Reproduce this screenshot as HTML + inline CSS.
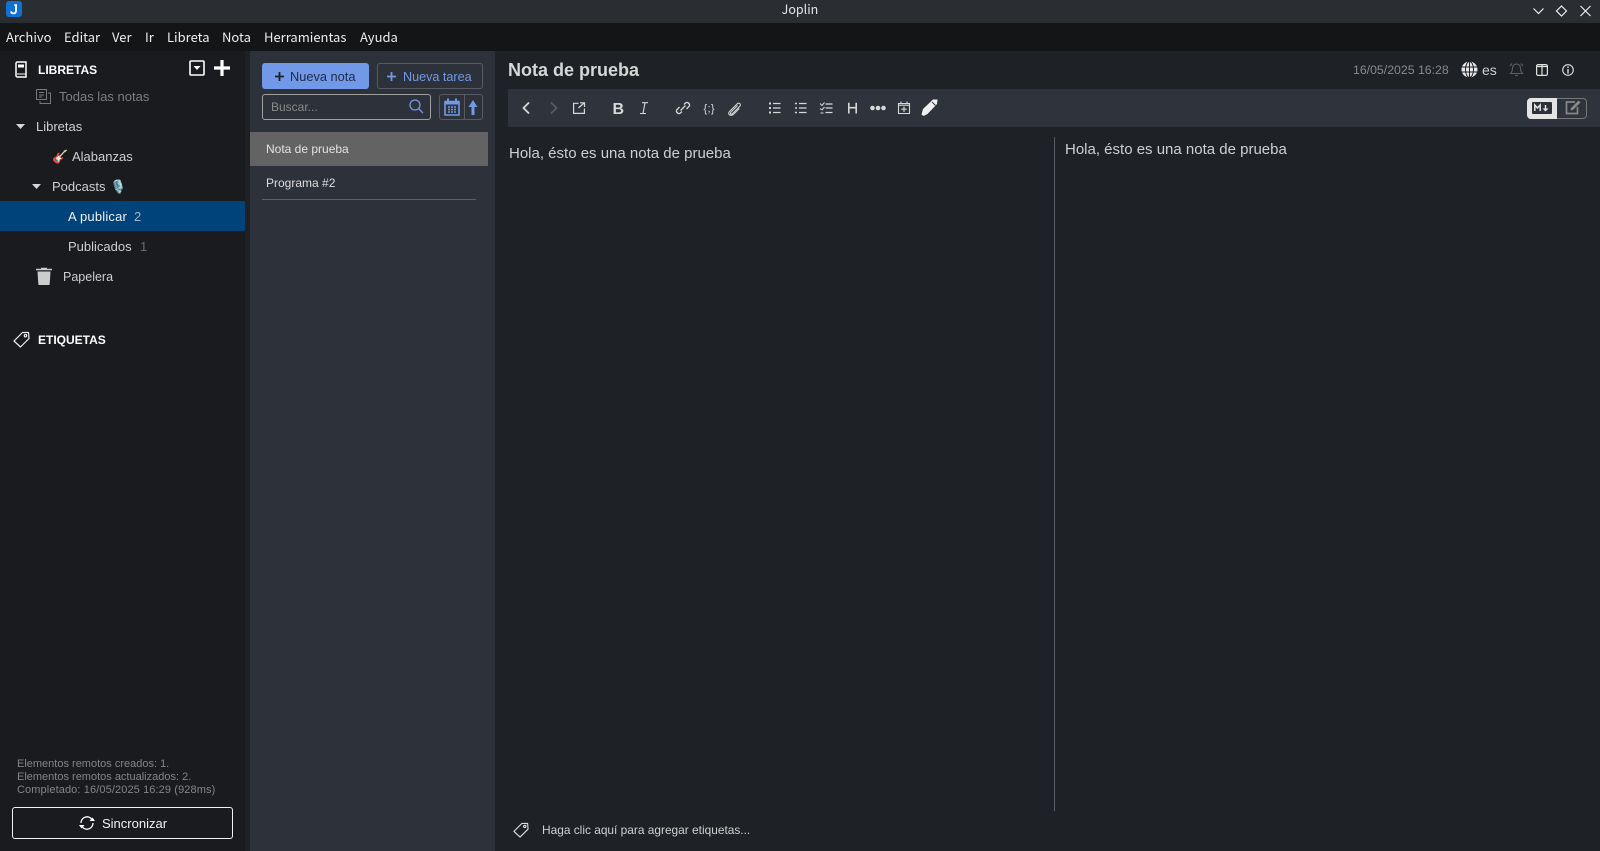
<!DOCTYPE html>
<html><head><meta charset="utf-8"><title>Joplin</title>
<style>
html,body{margin:0;padding:0;width:1600px;height:851px;overflow:hidden;background:#1e2126;font-family:"Liberation Sans",sans-serif}
.a{position:absolute;white-space:nowrap}
.t{position:absolute;white-space:nowrap;line-height:16px;font-size:13px;transform:translateY(-50%)}
.m{position:absolute;top:28px;line-height:18px;font-size:13px;color:#eee;font-family:"Noto Sans CJK JP","Liberation Sans",sans-serif;white-space:nowrap}
svg{position:absolute;overflow:visible;fill:none}
</style></head><body>
<!-- bars -->
<div class="a" style="left:0;top:0;width:1600px;height:23px;background:#2a2e33"></div>
<div class="a" style="left:0;top:23px;width:1600px;height:28px;background:#141517"></div>
<div class="a" style="left:0;top:51px;width:245px;height:800px;background:#1a1b1f"></div>
<div class="a" style="left:245px;top:51px;width:5px;height:800px;background:#1e2024"></div>
<div class="a" style="left:250px;top:51px;width:245px;height:800px;background:#2d3139"></div>
<div class="a" style="left:495px;top:51px;width:1105px;height:800px;background:#1e2126"></div>

<!-- logo -->
<div class="a" style="left:6px;top:1px;width:16px;height:16px;border-radius:3px;background:#1071d3"></div>
<svg style="left:6px;top:1px" width="16" height="16" viewBox="0 0 16 16"><path d="M10 3.200V10.200A2.600 2.600 0 0 1 4.900 10.400" stroke="#fff" stroke-width="1.800"/><path d="M8 4H11" stroke="#fff" stroke-width="1.200"/></svg>
<div class="t" style="left:0;width:1600px;text-align:center;top:9px;font-size:12.500px;color:#e4e4e4;font-family:'Noto Sans CJK JP','Liberation Sans',sans-serif">Joplin</div>
<svg style="left:1530px;top:3px" width="65" height="16" viewBox="0 0 65 16" stroke="#eee" stroke-width="1.200"><path d="M3.500 5.500L8.500 10.500L13.500 5.500"/><path d="M32 3.500L37 8.500L32 13.500L27 8.500Z" transform="translate(-.5 -.5)"/><path d="M51.500 3.500L61.500 13.500M61.500 3.500L51.500 13.500" transform="translate(-1 -.5)"/></svg>

<!-- menu -->
<div class="m" style="left:6px">Archivo</div><div class="m" style="left:64px">Editar</div><div class="m" style="left:112px">Ver</div><div class="m" style="left:145px">Ir</div><div class="m" style="left:167px">Libreta</div><div class="m" style="left:222px">Nota</div><div class="m" style="left:264px">Herramientas</div><div class="m" style="left:360px">Ayuda</div>

<!-- sidebar -->
<svg style="left:15px;top:61px" width="12" height="17" viewBox="0 0 12 17"><path d="M1 2.500A1.500 1.500 0 0 1 2.500 1H11V16H2.500A1.500 1.500 0 0 1 1 14.500Z" stroke="#fff" stroke-width="1.500"/><rect x="3" y="3.500" width="6" height="3" fill="#fff"/><path d="M2 13H11" stroke="#fff"/></svg>
<div class="t" style="left:38px;top:70px;font-size:12px;font-weight:bold;color:#fff">LIBRETAS</div>
<svg style="left:189px;top:60px" width="16" height="16" viewBox="0 0 16 16"><rect x="1" y="1" width="14" height="14" rx="1" stroke="#fff" stroke-width="1.600"/><path d="M4.500 6H11.500L8 10Z" fill="#fff"/></svg>
<svg style="left:214px;top:60px" width="16" height="16" viewBox="0 0 16 16"><path d="M8 0V16M0 8H16" stroke="#fff" stroke-width="3.200"/></svg>
<svg style="left:36px;top:89px" width="15" height="15" viewBox="0 0 15 15" stroke="#777" stroke-width="1"><path d="M.5.500H10.500V10.500H.5ZM3 3.500H8M3 6H8M3 8H6"/><path d="M12 4H14.500V14.500H4V12"/></svg>
<div class="t" style="left:59px;top:97px;color:#7d7d7d">Todas las notas</div>
<svg style="left:16px;top:124px" width="9" height="5"><path d="M0 0H9L4.500 5Z" fill="#d6d6d6"/></svg>
<div class="t" style="left:36px;top:127px;color:#cfcfcf">Libretas</div>
<div class="t" style="left:52px;top:157px;font-size:13px;color:#cfcfcf">🎸</div>
<div class="t" style="left:72px;top:157px;color:#cfcfcf">Alabanzas</div>
<svg style="left:32px;top:184px" width="9" height="5"><path d="M0 0H9L4.500 5Z" fill="#d6d6d6"/></svg>
<div class="t" style="left:52px;top:187px;color:#cfcfcf">Podcasts</div>
<div class="t" style="left:110px;top:187px;font-size:13px;color:#cfcfcf">🎙️</div>
<div class="a" style="left:0;top:201px;width:245px;height:30px;background:#00437a"></div>
<div class="t" style="left:68px;top:217px;letter-spacing:.2px;color:#f0f0f0">A publicar</div>
<div class="t" style="left:134px;top:217px;color:#9fb6cb">2</div>
<div class="t" style="left:68px;top:247px;color:#cfcfcf">Publicados</div>
<div class="t" style="left:140px;top:247px;color:#6c6c6c">1</div>
<svg style="left:36px;top:267px" width="16" height="18" viewBox="0 0 16 18"><path d="M0 2.500H16" stroke="#ccc" stroke-width="1.500"/><path d="M5 1.500H11" stroke="#ccc" stroke-width="1.500"/><path d="M1.500 4.500H14.500L13.700 17A1 1 0 0 1 12.700 18H3.300A1 1 0 0 1 2.300 17Z" fill="#ccc"/></svg>
<div class="t" style="left:63px;top:277px;font-size:12.500px;color:#cfcfcf">Papelera</div>
<svg style="left:13px;top:331px" width="17" height="17" viewBox="0 0 17 17" stroke="#eee" stroke-width="1.200"><path d="M1 10L9.500 1.500L15.500 1.500L16 7.500L7.500 16Z" stroke-linejoin="round"/><circle cx="12.500" cy="4.700" r="1.200"/></svg>
<div class="t" style="left:38px;top:340px;font-size:12px;font-weight:bold;color:#fff">ETIQUETAS</div>
<div class="a" style="left:17px;top:758px;font-size:11px;line-height:13px;color:#858585">Elementos remotos creados: 1.<br>Elementos remotos actualizados: 2.<br><span style="letter-spacing:.11px">Completado: 16/05/2025 16:29 (928ms)</span></div>
<div class="a" style="left:12px;top:807px;width:219px;height:30px;border:1px solid #f2f2f2;border-radius:3px"></div>
<svg style="left:78px;top:814px" width="18" height="18" viewBox="0 0 18 18" stroke="#fff" stroke-width="1.300"><path d="M3 9A6 6 0 0 1 14 5.500M15 9A6 6 0 0 1 4 12.500"/><path d="M11.500 7H17L14.500 3.500Z M6.500 11H1L3.500 14.500Z" fill="#fff" stroke="none"/></svg>
<div class="t" style="left:102px;top:824px;font-size:13px;color:#f2f2f2">Sincronizar</div>

<!-- note list -->
<div class="a" style="left:262px;top:63px;width:107px;height:26px;background:#7199e8;border-radius:3px"></div>
<svg style="left:275px;top:72px" width="9" height="9"><path d="M4.500 0V9M0 4.500H9" stroke="#1e2126" stroke-width="1.800"/></svg>
<div class="t" style="left:290px;top:76.500px;font-size:12.800px;color:#1e2a44">Nueva nota</div>
<div class="a" style="left:377px;top:63px;width:104px;height:24px;border:1px solid #575b63;border-radius:3px"></div>
<svg style="left:387px;top:72px" width="9" height="9"><path d="M4.500 0V9M0 4.500H9" stroke="#7199e8" stroke-width="1.800"/></svg>
<div class="t" style="left:403px;top:76.500px;font-size:12.600px;color:#7199e8">Nueva tarea</div>
<div class="a" style="left:262px;top:94px;width:167px;height:24px;border:1px solid #a0a0a0;border-radius:3px"></div>
<div class="t" style="left:271px;top:106.500px;font-size:12px;color:#8a8a8a">Buscar...</div>
<svg style="left:409px;top:99px" width="15" height="15" stroke="#7199e8" stroke-width="1.300"><circle cx="6" cy="6" r="5"/><path d="M9.500 9.500L14 14"/></svg>
<div class="a" style="left:439px;top:94px;width:42px;height:24px;border:1px solid #575b63;border-radius:3px"></div>
<div class="a" style="left:464px;top:95px;width:1px;height:24px;background:#575b63"></div>
<svg style="left:444px;top:98px" width="16" height="18" viewBox="0 0 16 18"><path d="M1 3.500H15V17H1Z" stroke="#7199e8" stroke-width="1.600"/><path d="M1 3H15V6.500H1Z" fill="#7199e8"/><path d="M4 .500V3M12 .500V3" stroke="#7199e8" stroke-width="2"/><path d="M4 9H6M7 9H9M10 9H12M4 11.500H6M7 11.500H9M10 11.500H12M4 14H6M7 14H9M10 14H12" stroke="#7199e8" stroke-width="1.500"/></svg>
<svg style="left:468px;top:100px" width="10" height="15" viewBox="0 0 10 15"><path d="M5 0L9.500 7H6.500V15H3.500V7H.5Z" fill="#7199e8"/></svg>
<div class="a" style="left:250px;top:132px;width:238px;height:34px;background:#636363"></div>
<div class="t" style="left:266px;top:149px;font-size:12px;color:#e2e2e2">Nota de prueba</div>
<div class="t" style="left:266px;top:183px;font-size:12px;color:#dedede">Programa #2</div>
<div class="a" style="left:262px;top:199px;width:214px;height:1px;background:#5d6066"></div>

<!-- editor head -->
<div class="t" style="left:508px;top:70px;font-size:18px;line-height:22px;font-weight:bold;color:#d6d6d6">Nota de prueba</div>
<div class="t" style="left:1353px;top:70px;font-size:12.300px;color:#8a8a8a">16/05/2025 16:28</div>
<svg style="left:1461px;top:61px" width="17" height="17" viewBox="0 0 17 17"><circle cx="8.500" cy="8.500" r="8" fill="#e8e8e8"/><path d="M0 6H17M0 11H17M8.500 0V17" stroke="#1e2126"/><ellipse cx="8.500" cy="8.500" rx="4" ry="8" stroke="#1e2126"/></svg>
<div class="t" style="left:1482px;top:70px;font-size:14px;color:#cfcfcf">es</div>
<svg style="left:1510px;top:62px" width="13" height="15" viewBox="0 0 13 15" stroke="#5f5f5f" stroke-width="1.100"><path d="M.5 11.500C2 10 2.500 8 2.500 6A4 4 0 0 1 10.500 6C10.500 8 11 10 12.500 11.500ZM5 13.500H8M0 4L2 1.500M13 4L11 1.500"/></svg>
<svg style="left:1536px;top:64px" width="12" height="12" viewBox="0 0 12 12" stroke="#e0e0e0" stroke-width="1.200"><rect x=".6" y=".6" width="10.800" height="10.800" rx="1.500"/><path d="M6 .5V11.500M.5 2.500H11.500"/></svg>
<svg style="left:1562px;top:64px" width="12" height="12" viewBox="0 0 12 12"><circle cx="6" cy="6" r="5.300" stroke="#e0e0e0" stroke-width="1.100"/><path d="M6 5V9.500" stroke="#e0e0e0" stroke-width="1.400"/><path d="M6 2.500V4" stroke="#e0e0e0" stroke-width="1.400"/></svg>

<!-- toolbar -->
<div class="a" style="left:508px;top:89px;width:1092px;height:38px;background:#2f333b"></div>
<svg style="left:508px;top:89px" width="460" height="38" viewBox="0 0 460 38" stroke="#d8d8d8" stroke-width="1.300">
<path d="M21 13.500L15.500 19L21 24.500" stroke-width="1.800"/>
<path d="M43 13.500L48.500 19L43 24.500" stroke="#555a62" stroke-width="1.800"/>
<path d="M70.500 14.300H65.600V24.400H76.400V19.500M70.500 19L76.500 13.500M72 13.800H76.500V18" stroke-width="1.200"/>
<text x="104.500" y="25" font-size="16" font-weight="bold" fill="#d8d8d8" stroke="none" font-family="Liberation Sans">B</text>
<path d="M134 13.700H140M132 24.500H138M137 13.700L135 24.500" stroke-width="1.100"/>
<path transform="translate(4 0)" d="M170 22.500L168.500 24A2.500 2.500 0 0 1 165 20.500L167.500 18M172 15.500L173.500 14A2.500 2.500 0 0 1 177 17.500L174.500 20M168.500 21.500L173.500 16.500" stroke-width="1.300"/>
<text x="195.500" y="23" font-size="11" letter-spacing=".3" fill="#d8d8d8" stroke="none" font-family="Liberation Sans">{;}</text>
<path transform="translate(-2.500 .5) translate(227 19) scale(.85) translate(-227 -19)" d="M233 15.500L225 23.500C223 26 226 26 227 25L235.500 16.500C238 13.500 234 11.500 232 14L223.500 22.500C220.500 26 225 29 228.500 25.500L235 19" stroke-width="1.200"/>
<path d="M261 14.500H263M261 19H263M261 23.500H263" stroke-width="2"/><path d="M265 14.500H272.500M265 19H272.500M265 23.500H272.500" stroke-width="1.300"/>
<path d="M287 14.500H289M287 19H289M287 23.500H289" stroke-width="1.600"/><path d="M291 14.500H298.500M291 19H298.500M291 23.500H298.500" stroke-width="1.300"/>
<path d="M312 14.500L314 16.500L316.500 13.500M312 19.500L314 21L316.500 18M312.500 24H315.500" stroke-width="1"/><path d="M317.500 15H324.500M317.500 19H324.500M317.500 23.500H324.500" stroke-width="1.300"/>
<path d="M340.800 13.700V24.500M348.200 13.700V24.500M340.800 18.700H348.200" stroke-width="1.600"/>
<circle cx="364.500" cy="19" r="2.300" fill="#d8d8d8" stroke="none"/><circle cx="370" cy="19" r="2.300" fill="#d8d8d8" stroke="none"/><circle cx="375.500" cy="19" r="2.300" fill="#d8d8d8" stroke="none"/>
<path d="M390.500 14.500H401.500V24.500H390.500ZM393 12.500V15M399 12.500V15M390.500 16.200H401.500M396 17.500V23M393.300 20.200H398.700" stroke-width="1.100"/>
<path d="M415 20L425 10.500L429.500 10.500L429 15L419.500 25L415.500 27L413.500 25.500Z" fill="#f0f0f0" stroke="none"/><path d="M424 13L427.500 16.500" stroke="#2f333b" stroke-width="1"/>
</svg>
<div class="a" style="left:1527px;top:98px;width:30px;height:21px;background:#e4e4e4;border-radius:4px 0 0 4px"></div>
<div class="a" style="left:1557px;top:98px;width:29px;height:19px;border:1px solid #777;border-left:0;border-radius:0 4px 4px 0"></div>
<div class="a" style="left:1532px;top:102px;width:20px;height:12px;background:#2d3139;border-radius:1px"></div>
<svg style="left:1534px;top:104px" width="16" height="8" viewBox="0 0 16 8"><path d="M.8 7V1L3.500 4L6.200 1V7" stroke="#e4e4e4" stroke-width="1.500"/><path d="M11.500 1V5" stroke="#e4e4e4" stroke-width="1.500"/><path d="M8.500 4.500H14.500L11.500 7.500Z" fill="#e4e4e4"/></svg>
<svg style="left:1565px;top:99px" width="17" height="17" viewBox="0 0 17 17"><path d="M10 3H1.500V14.500H12.500V8" stroke="#888" stroke-width="1.700"/><path d="M6 9L13.500 1.500L15.500 3.500L8 11L5.500 11.500Z" fill="#888"/></svg>

<!-- content -->
<div class="t" style="left:509px;top:154px;font-size:15px;line-height:20px;color:#cfcfcf">Hola, ésto es una nota de prueba</div>
<div class="a" style="left:1054px;top:137px;width:1px;height:674px;background:#5a5d63"></div>
<div class="t" style="left:1065px;top:150px;font-size:15px;line-height:20px;color:#cfcfcf">Hola, ésto es una nota de prueba</div>
<svg style="left:513px;top:822px" width="16" height="16" viewBox="0 0 17 17" stroke="#dcdcdc" stroke-width="1.200"><path d="M1 10L9.500 1.500L15.500 1.500L16 7.500L7.500 16Z" stroke-linejoin="round"/><circle cx="12.500" cy="4.700" r="1.200"/></svg>
<div class="t" style="left:542px;top:830px;font-size:11.900px;color:#d0d0d0">Haga clic aquí para agregar etiquetas...</div>
</body></html>
